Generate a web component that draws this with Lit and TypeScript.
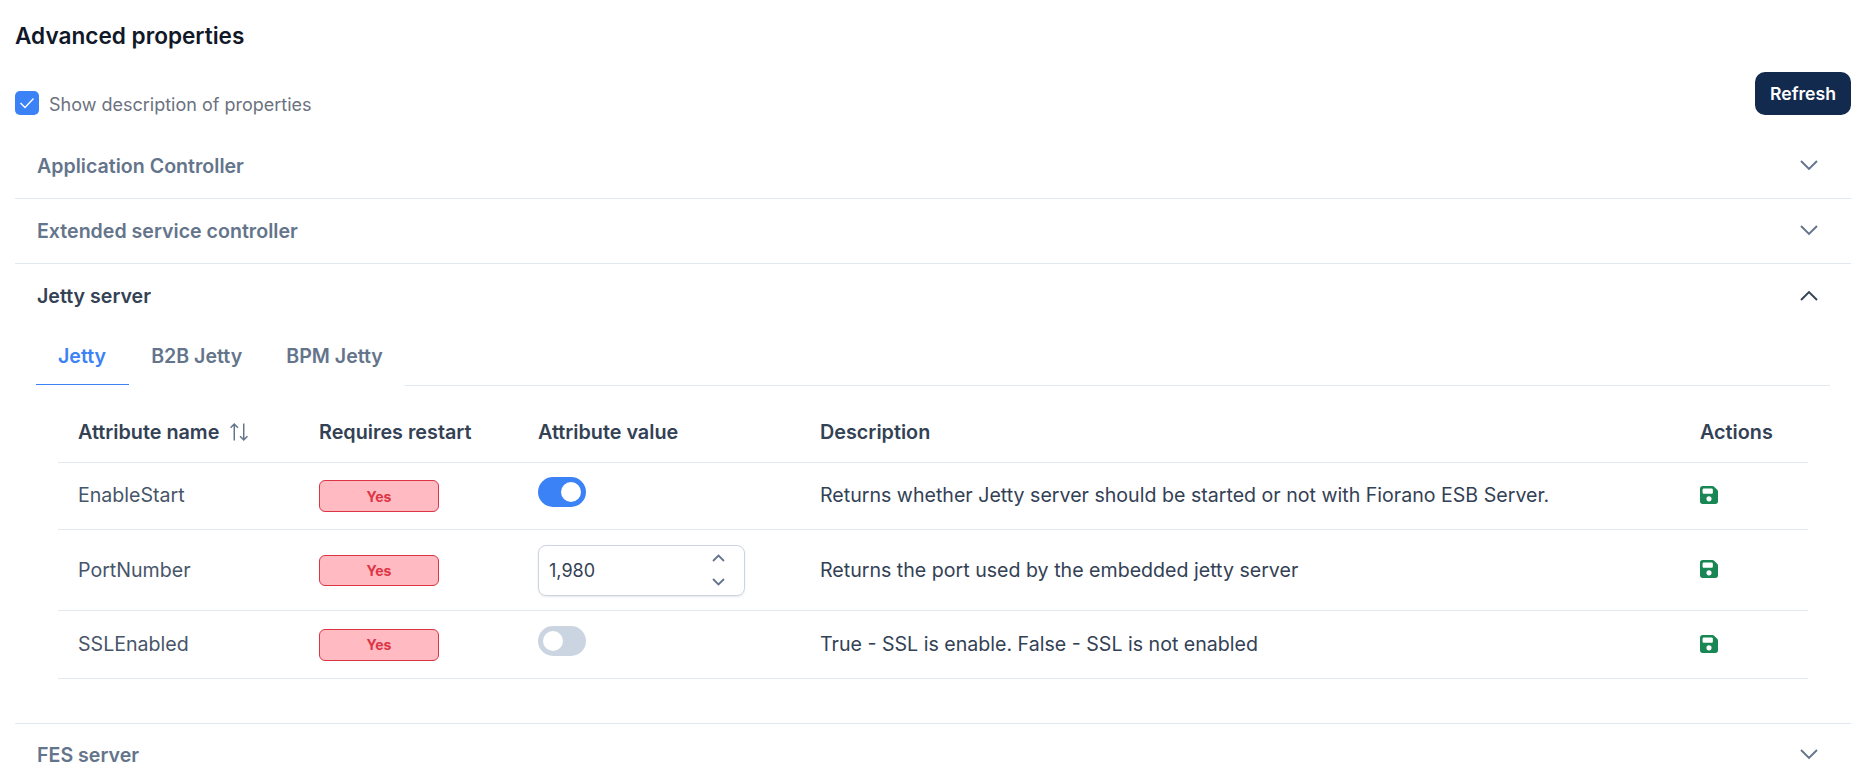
import { LitElement, html, css } from "lit";
import { customElement } from "lit/decorators.js";

const chevron = (up: boolean) => html`<svg class="chev" width="18" height="11" viewBox="0 0 18 11" fill="none" stroke="currentColor" stroke-width="1.9"><polyline points=${up ? "1,10 9,2 17,10" : "1,1 9,9 17,1"}></polyline></svg>`;
const floppy = html`<svg class="save" width="18" height="18" viewBox="0 32 448 448" fill="currentColor"><path d="M64 32C28.7 32 0 60.7 0 96V416c0 35.3 28.7 64 64 64H384c35.3 0 64-28.7 64-64V173.3c0-17-6.7-33.3-18.7-45.3L352 50.7C340 38.7 323.7 32 306.7 32H64zm0 96c0-17.7 14.3-32 32-32H288c17.7 0 32 14.3 32 32v64c0 17.7-14.3 32-32 32H96c-17.7 0-32-14.3-32-32V128zM224 288a64 64 0 1 1 0 128 64 64 0 1 1 0-128z"></path></svg>`;

@customElement("app-root")
export class AppRoot extends LitElement {
  static styles = css`
    :host { display: block; font-family: Inter, "Noto Sans", sans-serif; color: #334155; background: #fff; height: 771px; overflow: hidden; box-sizing: border-box; padding: 0 21px 0 15px; }
    * { box-sizing: border-box; }
    h1 { margin: 0; padding-top: 21px; height: 72px; font-size: 22.6px; line-height: 30px; font-weight: 600; color: #111827; }
    .top { display: flex; justify-content: space-between; align-items: flex-end; height: 43px; margin-bottom: 19px; }
    .check { display: flex; align-items: flex-start; gap: 10px; height: 24px; font-size: 18px; color: #6b7280; }
    .check-text { line-height: 28px; }
    .box { width: 24px; height: 24px; border-radius: 5px; background: #3b82f6; display: flex; align-items: center; justify-content: center; }
    .btn { width: 96px; height: 43px; border: 0; border-radius: 10px; background: #132a4f; color: #fff; font: 600 17.6px Inter, sans-serif; padding: 0; }
    .head { display: flex; justify-content: space-between; align-items: center; height: 65px; padding: 0 33px 1px 22px; font-size: 19.6px; font-weight: 600; color: #64748b; border-bottom: 1px solid #e2e8f0; }
    .head.open { border-bottom: 0; color: #334155; padding-bottom: 2px; }
    .item.last .head { border-bottom: 0; padding-bottom: 4px; }
    .body { padding: 0 21px 44px 21px; border-bottom: 1px solid #e2e8f0; }
    .tabs { display: flex; height: 57px; }
    .tab { height: 56px; padding: 0 22px 2px; display: flex; align-items: center; font-size: 19.6px; font-weight: 600; color: #64748b; }
    .tab.active { color: #3b82f6; border-bottom: 1px solid #3b82f6; padding-right: 23px; }
    .fill { flex: 1; border-bottom: 1px solid #e2e8f0; }
    .table { margin: 16px 22px 0; }
    .row { display: grid; grid-template-columns: 241px 219px 282px 880px 1fr; align-items: center; border-bottom: 1px solid #e2e8f0; font-size: 19.6px; }
    .row > div { padding-left: 20px; }
    .row.th { height: 61px; font-size: 19.8px; font-weight: 600; color: #334155; }
    .row.r1 { height: 67px; }
    .row.r2 { height: 81px; }
    .row.r3 { height: 68px; }
    .row.r1 > .txt, .row.r3 > .txt { padding-bottom: 2px; }
    .name { display: flex; align-items: center; gap: 10px; }
    .sort { color: #64748b; }
    .row > .td-name { color: #475569; }
    .badge { width: 120px; height: 32px; border: 1px solid #dc3545; border-radius: 6px; background: #ffbac2; color: #dc3545; font-size: 14px; font-weight: 700; display: flex; align-items: center; justify-content: center; }
    .r2 .badge { height: 31px; }
    .toggle { width: 48px; height: 30px; border-radius: 15px; background: #cbd5e1; padding: 5px; margin-bottom: 8px; display: flex; }
    .toggle.on { background: #3b82f6; justify-content: flex-end; }
    .knob { width: 20px; height: 20px; border-radius: 50%; background: #fff; }
    .input { width: 207px; height: 51px; border: 1px solid #cbd5e1; border-radius: 8px; box-shadow: 0 1px 2px rgba(15,23,42,.1); display: flex; align-items: center; justify-content: space-between; padding: 0 19px 0 10px; color: #334155; font-size: 18px; }
    .spin { display: flex; flex-direction: column; gap: 16px; color: #64748b; }
    .save { color: #198754; display: block; margin-bottom: 2px; }
    .chev { display: block; }
  `;

  renderRow(cls: string, name: string, value: unknown, desc: string) {
    return html`<div class="row ${cls}">
      <div class="td-name txt">${name}</div>
      <div><div class="badge">Yes</div></div>
      <div>${value}</div>
      <div class="txt">${desc}</div>
      <div>${floppy}</div>
    </div>`;
  }

  render() {
    const toggle = (on: boolean) => html`<div class="toggle ${on ? "on" : ""}"><div class="knob"></div></div>`;
    const input = html`<div class="input"><span>1,980</span><span class="spin">
      <svg width="13" height="8" viewBox="0 0 13 8" fill="none" stroke="currentColor" stroke-width="1.8"><polyline points="1,7 6.5,1.5 12,7"></polyline></svg>
      <svg width="13" height="8" viewBox="0 0 13 8" fill="none" stroke="currentColor" stroke-width="1.8"><polyline points="1,1 6.5,6.5 12,1"></polyline></svg>
    </span></div>`;
    return html`
      <h1>Advanced properties</h1>
      <div class="top">
        <label class="check"><span class="box"><svg width="16" height="12" viewBox="0 0 16 12" fill="none" stroke="#fff" stroke-width="1.3"><polyline points="1.5,6 6,10.5 14.5,1.5"></polyline></svg></span><span class="check-text">Show description of properties</span></label>
        <button class="btn">Refresh</button>
      </div>
      <div class="item"><div class="head"><span>Application Controller</span>${chevron(false)}</div></div>
      <div class="item"><div class="head"><span>Extended service controller</span>${chevron(false)}</div></div>
      <div class="item">
        <div class="head open"><span>Jetty server</span>${chevron(true)}</div>
        <div class="body">
          <div class="tabs">
            <div class="tab active">Jetty</div><div class="tab">B2B Jetty</div><div class="tab">BPM Jetty</div><div class="fill"></div>
          </div>
          <div class="table">
            <div class="row th">
              <div class="name">Attribute name <svg class="sort" width="20" height="20" viewBox="0 0 19 18" fill="none" stroke="currentColor" stroke-width="1.4"><path d="M5 17V1.5M1.5 5L5 1.5 8.5 5M14 1v15.5M10.5 13l3.5 3.5 3.5-3.5"></path></svg></div>
              <div>Requires restart</div><div>Attribute value</div><div>Description</div><div>Actions</div>
            </div>
            ${this.renderRow("r1", "EnableStart", toggle(true), "Returns whether Jetty server should be started or not with Fiorano ESB Server.")}
            ${this.renderRow("r2", "PortNumber", input, "Returns the port used by the embedded jetty server")}
            ${this.renderRow("r3", "SSLEnabled", toggle(false), "True - SSL is enable. False - SSL is not enabled")}
          </div>
        </div>
      </div>
      <div class="item last"><div class="head"><span>FES server</span>${chevron(false)}</div></div>
    `;
  }
}
